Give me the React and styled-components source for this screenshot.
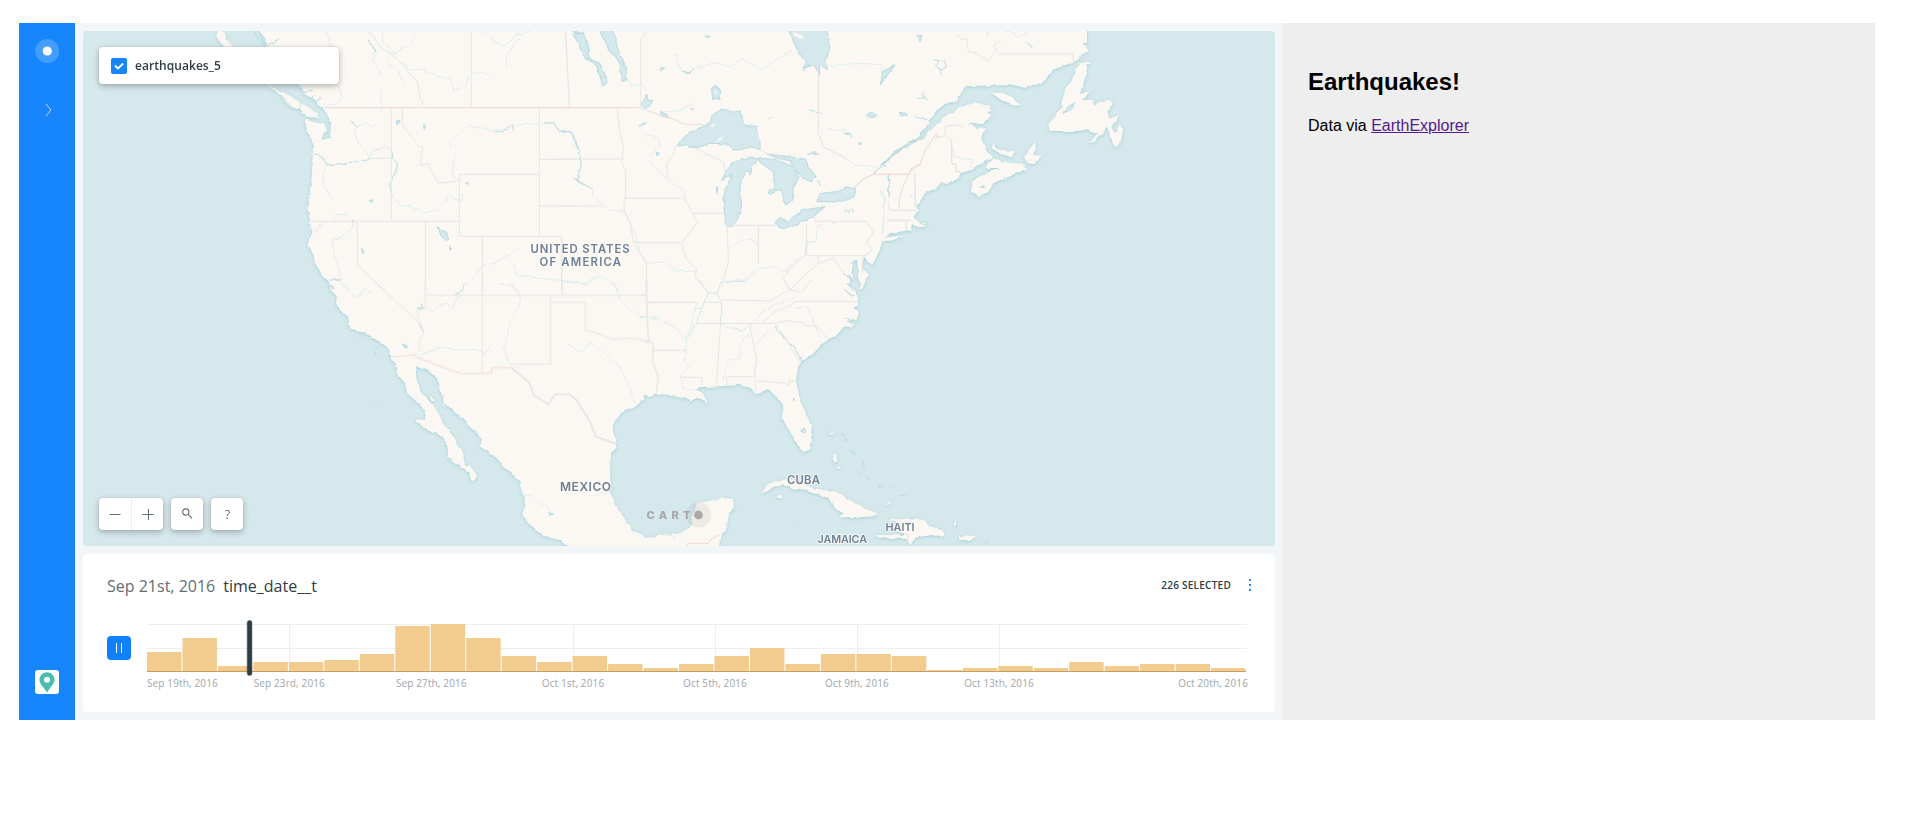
import React from "react";
import styled, { createGlobalStyle } from "styled-components";

const Global = createGlobalStyle`
  * { box-sizing: border-box; }
  body { margin: 0; background: #fff; font-family: "Open Sans", sans-serif; }
`;

const Frame = styled.div`
  display: flex;
  width: 1856px;
  height: 697px;
  margin: 23px 0 0 19px;
  background: #eee;
`;

const Sidebar = styled.nav`
  display: flex;
  flex-direction: column;
  align-items: center;
  width: 56px;
  padding: 16px 0 26px;
  background: #1785fb;
`;

const Chevron = styled.svg`
  margin-top: 40px;
  margin-left: 1px;
`;

const Avatar = styled.div`
  display: flex;
  justify-content: center;
  align-items: center;
  width: 24px;
  height: 24px;
  margin-top: auto;
  border-radius: 3px;
  background: #fff;
`;

const Dashboard = styled.main`
  display: flex;
  flex-direction: column;
  gap: 8px;
  width: 1208px;
  padding: 8px;
  background: #f2f6f9;
`;

const MapPanel = styled.section`
  position: relative;
  height: 515px;
  border-radius: 4px;
  overflow: hidden;
  background: #d5e8eb;
`;

const MapSvg = styled.svg`
  display: block;
`;

const Overlay = styled.div`
  position: absolute;
  inset: 0;
  display: flex;
  flex-direction: column;
  justify-content: space-between;
  align-items: flex-start;
  padding: 16px;
`;

const Floating = styled.div`
  display: flex;
  align-items: center;
  width: ${(p) => p.$w}px;
  height: ${(p) => p.$h}px;
  border-radius: 4px;
  background: #fff;
  box-shadow: 0 2px 6px rgba(0, 0, 0, 0.28), 0 0 2px rgba(0, 0, 0, 0.12);
`;

const LegendCard = styled(Floating)`
  gap: 8px;
  padding: 1px 12px 0;
  color: #2e3c43;
  font-size: 12px;
  font-weight: 600;
  line-height: 16px;
  letter-spacing: 0.06px;
`;

const Checkbox = styled.span`
  display: flex;
  width: 16px;
  height: 16px;
  border-radius: 2px;
  background: #1785fb;
`;

const LayerName = styled.span`
  padding-bottom: 1px;
`;

const Controls = styled.div`
  display: flex;
  gap: 8px;
`;

const ControlButton = styled.button`
  display: flex;
  flex: 1;
  align-items: center;
  justify-content: center;
  height: 32px;
  padding: 0 0 0 1px;
  border: 0;
  border-left: ${(p) => (p.$divided ? "1px solid #eee" : "0")};
  background: none;
  color: #636d72;
  font: 12px "Open Sans", sans-serif;
`;

const Widget = styled.section`
  height: 158px;
  padding: 20px 24px 0;
  border-radius: 4px;
  background: #fff;
`;

const WidgetHeader = styled.header`
  display: flex;
  align-items: center;
  height: 24px;
  font-size: 16px;
  color: #2e3c43;
`;

const CurrentDate = styled.span`
  margin-right: 8px;
  color: #636d72;
`;

const Selected = styled.span`
  margin: -2px 18px 0 auto;
  font-size: 10px;
  font-weight: 600;
  letter-spacing: 0.25px;
`;

const Dots = styled.span`
  display: flex;
  flex-direction: column;
  gap: 3px;
  margin-top: -2px;
`;

const Dot = styled.i`
  width: 2px;
  height: 2px;
  background: #1785fb;
`;

const WidgetBody = styled.div`
  display: flex;
  margin-top: 22px;
`;

const Pause = styled.button`
  display: flex;
  justify-content: center;
  align-items: center;
  gap: 4px;
  width: 24px;
  height: 24px;
  margin: 16px 16px 0 0;
  padding: 0;
  border: 0;
  border-radius: 4px;
  background: #1181fb;
`;

const PauseBar = styled.i`
  width: 1px;
  height: 10px;
  background: #fff;
`;

const TickLabel = styled.text`
  fill: #a0a5a8;
  font-size: 10px;
  letter-spacing: 0.13px;
`;

const Sheet = styled.aside`
  flex: 1;
  padding: 45px 25px;
  color: #000;
  font-family: "Liberation Sans", Arial, sans-serif;
  font-size: 16px;
`;

const Title = styled.h2`
  margin: 0;
  font-size: 24px;
  line-height: 28px;
`;

const Paragraph = styled.p`
  margin: 21px 0 0;
  line-height: 18px;
`;

const Link = styled.a`
  color: #551a8b;
  text-decoration: underline;
`;

const MAINLAND =
  "M254,20 259,31 265,38 266,47 273,52 276,62 285,72 298,84 303,93 308,97 315,100 319,106 323,108 327,114 329,118 331,127 330,138 323,139 323,135 327,130 324,124 317,123 304,119 307,130 310,140 314,146 312.5,153 312.7,163 311.5,180 309,197 307.5,208 310,223 311.5,233 308.5,245 313.5,255 315,265 323,277 328,280 331.5,292 337,297 336,303 342,312 348,319 351,330 362,332 375,338 387,347 390,357 395,365 398,375 405,383 407,393 417,402 425,410 424,420 415,419 422,427 432,433 436,432 447,442 448,457 460,467 468,473 472,481 477,477 475,471 469,465 467,467 465,465 463,453 456,443 453,435 443,423 438,412 430,402 419,390 417,380 416,367 427,369 432,374 437,377 439,388 445,402 453,412 465,418 467,425 477,433 482,440 479,446 493,455 500,463 510,472 520,483 522,495 526,500 525,507 522,513 528,523 543,535 560,541 568,546 575,560 712,560 719,546 722,535 727,530 728,515 735,505 733,499 723,498 712,500 697,504 693,513 690,528 677,534 660,535 647,538 641,534 633,532 627,522 617,507 611,493 610,473 611,453 616,448 617,443 613,432 613,424 619,415 625,410 635,407 643,400 643,395 649,396 655,394 673,395 687,398 690,402 697,397 708,403 703,393 695,389 700,387 707,387 723,386 740,385 750,388 755,395 768,389 775,395 782,405 783,420 790,432 797,443 803,452 809,450 812,437 811,425 805,412 799,395 796,380 798,367 803,360 813,354 823,343 835,337 843,328 853,326 854,324 846,321 856,320 860,315 859,311 853,309 858,305 858,300 855,290 848,284 851,281 847,273 853,279 852,263 857,260 858,267 860,288 868,275 862,268 864,257 872,265 880,250 882,241 890,233 910,230 912,225 915,227 925,227 926,223 920,223 914,216 918,210 917,207 925,193 937,188 940,182 947,184 959,178 960,173 972,170 987,160 991,158 1002,162 1023,164 1027,169 1013,175 1000,181 992,185 988,192 977,197 971,192 972,182 981,175 992,170 1002,168 985,168 988,163 993,157 987,152 982,140 986,128 978,129 972,125 967,125 976,123 983,123 991,117 988,113 992,112 989,106 977,103 969,104 958,108 942,119 923,138 903,148 880,167 882,163 895,151 917,138 928,123 937,110 947,103 957,101 962,90 968,86 1013,85 1022,87 1040,84 1057,67 1073,63 1088,52 1083,43 1087,43 1087,20Z";

/* Each tile is drawn on its own 3x grid; origin is the tile's corner. */
const TILES = [
  {
    x: 220, y: 30,
    islands: "M-5,-10 15,10 22,30 40,55 12,55 2,38 -10,20Z M140,160 162,172 185,185 205,195 230,208 248,222 280,240 300,262 262,262 240,240 218,232 190,205 170,185 150,170Z",
    lakes: "M652,590 663,602 678,604 686,625 680,632 664,618Z M612,282 617,290 615,298 611,295Z M1060,5 1080,8 1080,20 1068,25 1060,17Z M448,510 460,510 455,517Z M425,655 431,663 427,670Z M690,648 695,655 690,660Z M738,458 747,459 744,465Z M530,272 540,270 535,284Z M397,571 402,573 399,580Z",
    borders: "M514,235V574 M547,235V282L562,305 580,325 593,348 608,352 600,405 624,402 640,435 655,460 703,455 718,450 M270,574H718 M718,433V619H1025V780 M718,433H958 M958,235V619 M958,388H1080 M958,528H1080 M449,385H518 M754,3V230 M1037,3 1048,230 M440,3 455,12 480,50 510,70 540,95 565,125 592,155 600,205 614,229 M412,574V705L492,780 M616,574V780 M787,619V780",
    intl: "M315,233H1080",
    rivers: "M320,3 330,45 355,60 M355,160 365,200 345,223 312,223 M445,30 465,60 460,90 485,140 M485,5 490,35 520,70 580,40 585,3 M540,95 570,120 610,118 650,138 690,145 703,183 730,172 755,130 795,128 820,145 M790,5 825,35 850,50 890,15 940,3 M910,10 860,75 860,110 M500,92 530,120 553,162 M485,175 480,205 492,225 480,250 M410,290 403,310 415,340 430,350 447,382 465,360 500,350 515,365 M410,290 440,280 460,292 475,275 M320,404 305,450 315,475 340,507 M516,495 540,525 580,530 610,550 655,540 M665,525 688,495 714,512 M730,490 723,517 M750,285 690,335 693,350 M750,285 780,295 825,303 880,285 960,280 M705,368 697,435 708,442 M400,580 395,595 365,620 335,632 345,680 360,720 355,750 380,780 M346,552 380,555 M346,560 330,577 300,582 290,605 270,590 M895,645V657L845,685 825,700 790,705 765,740 730,775 M880,700 890,735 960,745 1080,757 M840,762 870,765 895,780",
    water: "M278,370 300,376 322,404 380,400 449,385 M516,365 518,382 533,403 525,430 508,463 516,495 M966,280 1000,278 1018,303 1055,306 M825,308 862,298 876,287 882,303 M1055,310 1075,360 1080,385 M240,165 253,188 275,178 M275,208 285,195 M290,215 303,202 M100,3 125,45 M120,3 132,50 M132,48 160,42 175,25 M445,30 470,67 M238,240 245,225 M393,272 408,290 M1060,443 1080,455 M327,750H362 M327,760 340,780 M530,270 538,280",
  },
  {
    x: 560, y: 30,
    lakes: "M345,350 385,310 440,285 455,262 480,238 505,243 540,245 553,285 590,290 600,335 600,358 572,350 545,358 525,360 500,342 470,340 448,340 420,352 390,352 375,345Z M515,400 545,388 575,380 595,390 575,412 572,437 562,422 545,445 540,470 542,490 545,530 530,575 512,590 498,582 490,520 495,480 510,450 514,432 485,452 500,420Z M598,385 640,387 700,410 715,445 700,470 698,510 675,527 665,480 648,482 630,497 625,487 645,475 640,425 600,397Z M622,372 660,376 735,388 745,410 768,440 755,455 730,445 705,420 695,392 650,385Z M768,515 785,490 830,485 860,470 888,480 882,500 860,510 830,515Z M645,578 660,562 680,575 730,540 795,530 765,555 700,590 670,598Z M680,-10 705,45 715,65 740,97 730,118 750,107 765,108 780,138 778,105 805,120 795,90 810,55 795,-10Z M115,-10 155,-10 178,70 200,115 200,150 183,155 180,100 160,75 150,65Z M40,10 70,10 85,50 85,85 118,100 145,155 128,168 112,108 75,85Z M455,175 465,165 482,180 480,205 458,208Z M300,112 312,115 303,123Z M435,18H450L445,25Z M290,368 297,372 290,377Z M920,260 935,245 950,258 940,262Z M1020,250 1040,252 1030,260Z M965,150 970,130 1000,105 985,125 968,155Z M895,343 905,338 900,347Z M743,372 765,368 777,373Z M245,225 260,195 265,212 278,214 265,232 250,237Z M238,288 255,275 260,280Z M300,242 328,262 310,260Z M469,470 474,475 471,490Z M365,123 382,128 400,118 378,132Z",
    holes: "M693,5 730,18 728,28 705,20Z M445,292 465,278 460,290Z M475,330 490,315 485,330 465,340Z M463,180 470,185 467,196Z",
    borders: "M16,3 29,230 M242,235V28L262,3 M172,235 178,300 190,350 185,400 197,420 197,505 192,510 193,545 210,580 220,635 240,672 260,703 M-10,387H190 M190,505H372 M0,528H125 M220,637H360 M260,703V780 M400,550H493 M345,350 338,380 320,400 322,445 M408,355 440,372 490,395 497,430 M502,585 505,695 485,770 M505,586H648 M595,586V703 M740,580V677H920 M766,575V562 M766,574H920L940,605 920,640 938,660 908,682 906,730 M740,630 735,675 690,715 670,745 690,780 M690,780 735,735 775,700 820,685 860,740 M775,677V700 M775,130V308L790,350 850,380 M985,515 989,541H1058 M982,570H1050 M1040,575V600 M1065,430V535 M1015,540 1022,490 1045,430 M372,505 413,575 365,640 380,690 410,715 405,740 440,780 M0,619H5V780 M600,358 640,380",
    intl: "M-10,233H238 M258,240 300,255 335,265 370,282 430,283 M940,433H1048L1055,418 1080,402 M878,475 910,448 940,433",
    rivers: "M340,75 352,72 350,95 365,120 M400,118 462,97 510,110 545,87 605,118 640,95 700,60 M810,107 900,100 965,105 968,150 M200,145 215,170 245,160 260,180 M310,245 360,242 398,220 M247,325 255,310 300,330 295,355 270,375 275,405 320,445 370,480 377,515 M800,295 830,300 860,300 M790,350 820,370 850,378 880,405 950,410 M507,655 540,632 575,625 600,650 M245,672 265,700 310,695 340,718 405,725 M0,750 75,760 120,738 165,765 175,780 M960,480 975,505 965,620 M740,650 770,630 770,590 800,570 830,583 M95,465 100,500 145,538 195,545 220,600 245,675 M485,757 530,750 555,755 590,715 640,710 670,725 735,675 740,635 770,635",
    water: "M0,303 35,305 55,355 64,405 52,450 95,478 M940,433 1000,375 1080,325 M960,400 980,410 M985,435 988,500 M752,240 782,252 M850,475 880,475 M850,310 870,310 875,325 M625,268 640,262 M775,450 780,465 M855,545 860,535 M868,550 865,535 M882,548 872,535 M390,238 405,240 M850,730 880,755 M872,700 882,695",
  },
  {
    x: 880, y: 30,
    islands: "M635,98 622,95 600,100 575,150 555,180 545,215 548,235 528,250 505,290 510,303 600,303 630,295 628,305 655,308 640,330 622,337 645,337 665,310 680,290 690,310 700,345 718,350 730,300 718,283 705,310 695,290 718,255 690,262 682,245 698,225 690,210 670,212 640,225 640,210 610,210 628,185 600,190 622,125 620,105Z M330,185 370,190 395,202 422,222 410,228 380,220 355,205Z M432,380 465,335 468,360 462,375 485,378 465,402 438,398 460,385 440,395Z M340,338 350,358 408,365 395,382 365,372 335,355Z M8,625 60,618 70,620 25,635 8,635Z",
    lakes: "M110,15 125,17 120,32 115,22Z M58,247 75,250 78,257 66,260Z M0,165 10,125 45,105 25,130Z M303,470H312V475H303Z M550,250 565,230 585,218 570,240Z",
    borders: "M230,10 245,30 260,25 265,65 290,70 325,93 350,60 340,45 365,30 M355,72H580V100 M322,3V22 M195,315 195,290 220,285 250,290 M175,320 200,318 215,330 M103,420 107,530 M85,435 70,465 60,500 55,540 M30,541H108 M20,572H92 M78,575V600",
    intl: "M0,433H88L92,418 120,405 135,360 168,312 175,325 M215,330V400L228,405V425H240",
    rivers: "M375,3 405,8 415,22 450,5 M175,320 145,355 M215,345 222,380 265,388 275,390 272,415 M0,495 15,500 8,620",
    water: "M105,262 130,265 150,275 M440,38 460,53 M165,88 175,92 170,110 182,120 198,112 196,90 182,95 M182,118V135 M108,205 130,200 145,212 M128,188 132,203 M25,435 28,500 M90,495 97,502 M120,580 138,587 137,575",
  },
  {
    x: 280, y: 280,
    islands: "M488,370 495,367 497,378 490,380Z M450,352 456,352 465,363 458,363Z",
    lakes: "M367,192 375,195 383,205 375,203Z M805,698 822,703 805,703Z",
    borders: "M280,0 415,128 M436,0V85 M436,46H1098 M607,0V280 M847,0V46 M688,253H811V67H916V150 M811,46V67 M916,150 940,155 970,168 1000,178 1050,175 1080,180 1110,190 M1100,0V65L1106,185 M1100,67H1140 M413,85V110L432,158 420,180 418,215 M1118,190V245L1135,290 1130,335 M1120,211H1140",
    mex: "M693,262 748,308 762,345 805,373 825,343 868,343 890,360 930,425 947,470 1010,492",
    intl: "M333,231 410,224 M405,230 540,280H635V262H693",
    rivers: "M190,10 225,52 260,28 275,40 M440,80 460,98 475,80 500,70 515,88 540,40 560,8 M415,224 440,220 485,200 530,210 590,208 615,225 635,190 M665,13 700,15 722,45 718,75 688,120 680,185 670,205 690,253 M860,190 900,215 935,190 980,225 1020,260 1050,325 1065,370 M850,5 920,15 940,0 M1000,0 1025,65 1060,95 1085,113 1140,110 M735,645 755,650 775,670 800,675 810,695 M910,635 935,650 965,640 990,637",
    water: "M410,82 430,85 425,70 M525,45 550,30 555,15 M415,130 432,158 M145,5 160,22 M155,0H180 M278,178 290,182 M280,200 292,205 M283,218 290,222 M220,172 232,178 M285,372 292,375",
  },
  {
    x: 640, y: 280,
    islands: "M360,640 375,618 410,602 445,597 475,605 510,622 560,632 595,635 620,655 665,680 715,702 690,710 600,712 610,700 585,685 570,655 535,645 500,633 455,628 445,615 400,620 375,637Z M413,645 428,645 427,655 418,655Z M710,765 735,765 790,765 795,760 770,755 768,725 745,718 790,718 830,715 855,725 870,740 895,745 914,765 905,772 875,765 840,770 825,775 812,793 800,773 735,775 715,772Z M957,768 1005,767 995,780 957,780Z M578,535 585,522 593,545 583,545Z M590,553 603,565 595,568Z M735,672 755,668 745,675Z M562,462 585,460 575,467Z M665,3 677,3 668,25 660,30Z M945,715 948,715 948,740 945,740Z",
    lakes: "M483,450 490,443 497,450 493,459 485,457Z M460,355 464,358 462,362Z",
    borders: "M0,46H18 M18,0 20,67 25,180 40,190 38,245 55,290 48,340 M20,67H175L163,85H185 M40,211H137 M170,130H405L440,122 490,128 495,138 530,138 565,178 M245,60 390,63 450,28 M195,67H245 M460,65H655 M460,65 455,75 405,95 370,125 M242,130 230,300 232,315 M328,130 350,240 345,290H258L262,315 M122,292H185V315 M350,303 440,310 447,318 450,300 467,305 M405,130 440,180 480,250 M430,0 450,30 485,38 515,0 M0,175 40,190",
    intl: "M143,800V790H205L210,780 238,765 M795,760 805,770 798,785",
    rivers: "M0,112 50,115 105,140 135,175 M140,170 135,240 145,260 122,290 130,325 165,332 M165,85 150,150 138,175 M470,47 400,75 365,98 340,130 305,152 245,135 M395,145 345,195 M350,240 340,265 348,310 345,340 M340,160 315,170 300,200 300,235 265,240 245,310 M465,85 500,80 520,120 545,185 M85,765 105,770 108,787",
    main: "M175,0 205,38 195,60 165,135 137,185 M205,38 230,40 245,65 245,130 M230,40 245,8 315,3",
    water: "M405,140 430,170 465,205 485,245 M615,30 632,45 645,48 M620,10 640,28 M618,110 635,125 M560,465H580 M600,460 620,475 612,485",
    faint: "M628,508 650,525 M655,580 658,590 M668,540 675,560 M678,585 690,602 M712,610 722,625 730,612 M755,625 765,622 M780,645 800,647 M470,738 480,738 M280,697 288,690 M1035,790 1045,785",
  },
];

const LABELS = [
  { text: "UNITED STATES", x: 530.5, y: 253, w: 99, s: 11.3 },
  { text: "OF AMERICA", x: 539.5, y: 266, w: 81.5, s: 11.3 },
  { text: "MEXICO", x: 560, y: 490.5, w: 51, s: 12 },
  { text: "CUBA", x: 787, y: 484, w: 33, s: 11.3 },
  { text: "HAITI", x: 885.5, y: 530.5, w: 29, s: 10.8 },
  { text: "JAMAICA", x: 817.5, y: 542.5, w: 49.5, s: 10.8 },
];

function Basemap() {
  const line = { fill: "none", vectorEffect: "non-scaling-stroke", strokeLinejoin: "round" };
  return (
    <MapSvg width="1192" height="515" viewBox="83 31 1192 515">
      <defs>
        <filter id="coast" filterUnits="userSpaceOnUse" x="60" y="10" width="1240" height="560">
          <feTurbulence type="fractalNoise" baseFrequency="0.14" numOctaves="2" seed="4" result="n" />
          <feDisplacementMap in="SourceGraphic" in2="n" scale="4" xChannelSelector="R" yChannelSelector="G" result="land" />
          <feDropShadow in="land" dx="0" dy="0.8" stdDeviation="1.6" floodColor="#8fc6d0" floodOpacity="0.75" />
        </filter>
        <filter id="rough" filterUnits="userSpaceOnUse" x="60" y="10" width="1240" height="560">
          <feTurbulence type="fractalNoise" baseFrequency="0.16" numOctaves="2" seed="9" result="n" />
          <feDisplacementMap in="SourceGraphic" in2="n" scale="3.5" xChannelSelector="R" yChannelSelector="G" />
        </filter>
      </defs>
      <g filter="url(#coast)" fill="#fbf8f3">
        <path d={MAINLAND} />
        {TILES.map((t, i) => (
          <path key={i} d={t.islands} transform={`translate(${t.x} ${t.y}) scale(.33333)`} />
        ))}
      </g>
      <g filter="url(#rough)">
        {TILES.map((t, i) => (
          <g key={i} transform={`translate(${t.x} ${t.y}) scale(.33333)`}>
            <path d={t.rivers} stroke="#dfeeed" {...line} />
            <path d={t.main} stroke="#cfe5e8" {...line} />
            <path d={t.water} stroke="#bfdde2" strokeWidth="1.1" {...line} />
            <path d={t.faint} stroke="#c6dfe5" strokeWidth="1.5" {...line} />
            <path d={t.lakes} stroke="#bddce2" strokeWidth="1.1" {...line} fill="#d5e8eb" />
            <path d={t.holes} fill="#fbf8f3" />
          </g>
        ))}
      </g>
      {TILES.map((t, i) => (
        <g key={i} transform={`translate(${t.x} ${t.y}) scale(.33333)`}>
          <path d={t.borders} stroke="#e6e6e4" {...line} />
          <path d={t.mex} stroke="#dddcdc" strokeWidth="1.2" {...line} />
          <path d={t.intl} stroke="#eedddc" strokeWidth="1.2" {...line} />
        </g>
      ))}
      {LABELS.map((l) => (
        <text
          key={l.text}
          x={l.x}
          y={l.y}
          textLength={l.w}
          fontFamily="Inter, sans-serif"
          fontWeight="600"
          fontSize={l.s}
          fill="#6d7f96"
          stroke="#fbf8f3"
          strokeWidth="2"
          strokeOpacity=".85"
          paintOrder="stroke"
        >
          {l.text}
        </text>
      ))}
      <circle cx="698.5" cy="515" r="12.5" fill="#999" fillOpacity=".15" />
      <circle cx="698.5" cy="515" r="4.4" fill="#a8a8a8" />
      <text x="646.5" y="519" textLength="44" fontFamily="Inter, sans-serif" fontWeight="800" fontSize="11" fill="#a8a8a8">
        CART
      </text>
    </MapSvg>
  );
}

const COUNTS = [20, 34, 6, 10, 10, 12, 18, 46, 48, 34, 16, 10, 16, 8, 4, 8, 16, 24, 8, 18, 18, 16, 2, 4, 6, 4, 10, 6, 8, 8, 4];
const PITCH = 1099.5 / COUNTS.length;
const TICKS = [
  { text: "Sep 19th, 2016", x: 0, anchor: "start" },
  { text: "Sep 23rd, 2016", x: 142.3, anchor: "middle" },
  { text: "Sep 27th, 2016", x: 284.3, anchor: "middle" },
  { text: "Oct 1st, 2016", x: 426, anchor: "middle" },
  { text: "Oct 5th, 2016", x: 568, anchor: "middle" },
  { text: "Oct 9th, 2016", x: 710, anchor: "middle" },
  { text: "Oct 13th, 2016", x: 852, anchor: "middle" },
  { text: "Oct 20th, 2016", x: 1101, anchor: "end" },
];

function Histogram() {
  return (
    <svg width="1104" height="76" viewBox="0 -4 1104 76" overflow="visible">
      <g stroke="#eee">
        <path d="M0,.5H1100M0,24.5H1100M142.5,0V48M426.5,0V48M568.5,0V48M710.5,0V48M852.5,0V48" />
      </g>
      {COUNTS.map((h, i) => (
        <rect key={i} x={i * PITCH} y={48 - h} width={PITCH - 1} height={h} fill="#f2cc8f" />
      ))}
      <path d="M0,47.5H1099" stroke="#c69f60" />
      <rect x="99.5" y="-4" width="6" height="56" rx="3" fill="#2e3c43" fillOpacity=".35" />
      <rect x="100.3" y="-3.5" width="4.6" height="55" rx="2" fill="#2e3c43" />
      {TICKS.map((t) => (
        <TickLabel key={t.text} x={t.x} y="63" textAnchor={t.anchor}>
          {t.text}
        </TickLabel>
      ))}
    </svg>
  );
}

export default function App() {
  return (
    <>
      <Global />
      <Frame>
        <Sidebar>
          <svg width="24" height="24">
            <circle cx="12.2" cy="12" r="12" fill="#fff" fillOpacity=".2" />
            <circle cx="12.3" cy="12" r="4.6" fill="#fff" />
          </svg>
          <Chevron width="8" height="14" viewBox="0 0 8 14">
            <path d="M2,1 7,7 2,13" fill="none" stroke="#b9dafe" />
          </Chevron>
          <Avatar>
            <svg width="16" height="21" viewBox="0 0 16 21">
              <path d="M8 .2A7.6 7.6 0 0 0 .4 7.8C.4 12 5 15.5 8 20.6 11 15.5 15.6 12 15.6 7.8A7.6 7.6 0 0 0 8 .2Z" fill="#47bfb0" />
              <circle cx="8" cy="7.8" r="3" fill="#fff" />
            </svg>
          </Avatar>
        </Sidebar>
        <Dashboard>
          <MapPanel>
            <Basemap />
            <Overlay>
              <LegendCard $w={240} $h={37}>
                <Checkbox>
                  <svg width="16" height="16" viewBox="0 0 16 16">
                    <path d="M4,7.5 7,10.5 12.2,5.5" fill="none" stroke="#fff" strokeWidth="1.8" />
                  </svg>
                </Checkbox>
                <LayerName>earthquakes_5</LayerName>
              </LegendCard>
              <Controls>
                <Floating $w={64} $h={32}>
                  <ControlButton aria-label="Zoom out">
                    <svg width="12" height="12"><path d="M.5,6.5H11.5" stroke="#636d72" /></svg>
                  </ControlButton>
                  <ControlButton $divided aria-label="Zoom in">
                    <svg width="12" height="12"><path d="M.5,6.5H11.5M6.5,1V12" stroke="#636d72" /></svg>
                  </ControlButton>
                </Floating>
                <Floating $w={32} $h={32}>
                  <ControlButton aria-label="Search">
                    <svg width="12" height="12" viewBox="0 0 12 12">
                      <circle cx="3.8" cy="4" r="3.1" fill="none" stroke="#636d72" strokeWidth="1.1" />
                      <path d="M6,6.2 10,10.3" stroke="#636d72" strokeWidth="1.2" />
                    </svg>
                  </ControlButton>
                </Floating>
                <Floating $w={32} $h={32}>
                  <ControlButton>?</ControlButton>
                </Floating>
              </Controls>
            </Overlay>
          </MapPanel>
          <Widget>
            <WidgetHeader>
              <CurrentDate>Sep 21st, 2016</CurrentDate>
              <span>time_date__t</span>
              <Selected>226 SELECTED</Selected>
              <Dots>
                <Dot />
                <Dot />
                <Dot />
              </Dots>
            </WidgetHeader>
            <WidgetBody>
              <Pause aria-label="Pause">
                <PauseBar />
                <PauseBar />
              </Pause>
              <Histogram />
            </WidgetBody>
          </Widget>
        </Dashboard>
        <Sheet>
          <Title>Earthquakes!</Title>
          <Paragraph>
            Data via <Link href="#">EarthExplorer</Link>
          </Paragraph>
        </Sheet>
      </Frame>
    </>
  );
}
